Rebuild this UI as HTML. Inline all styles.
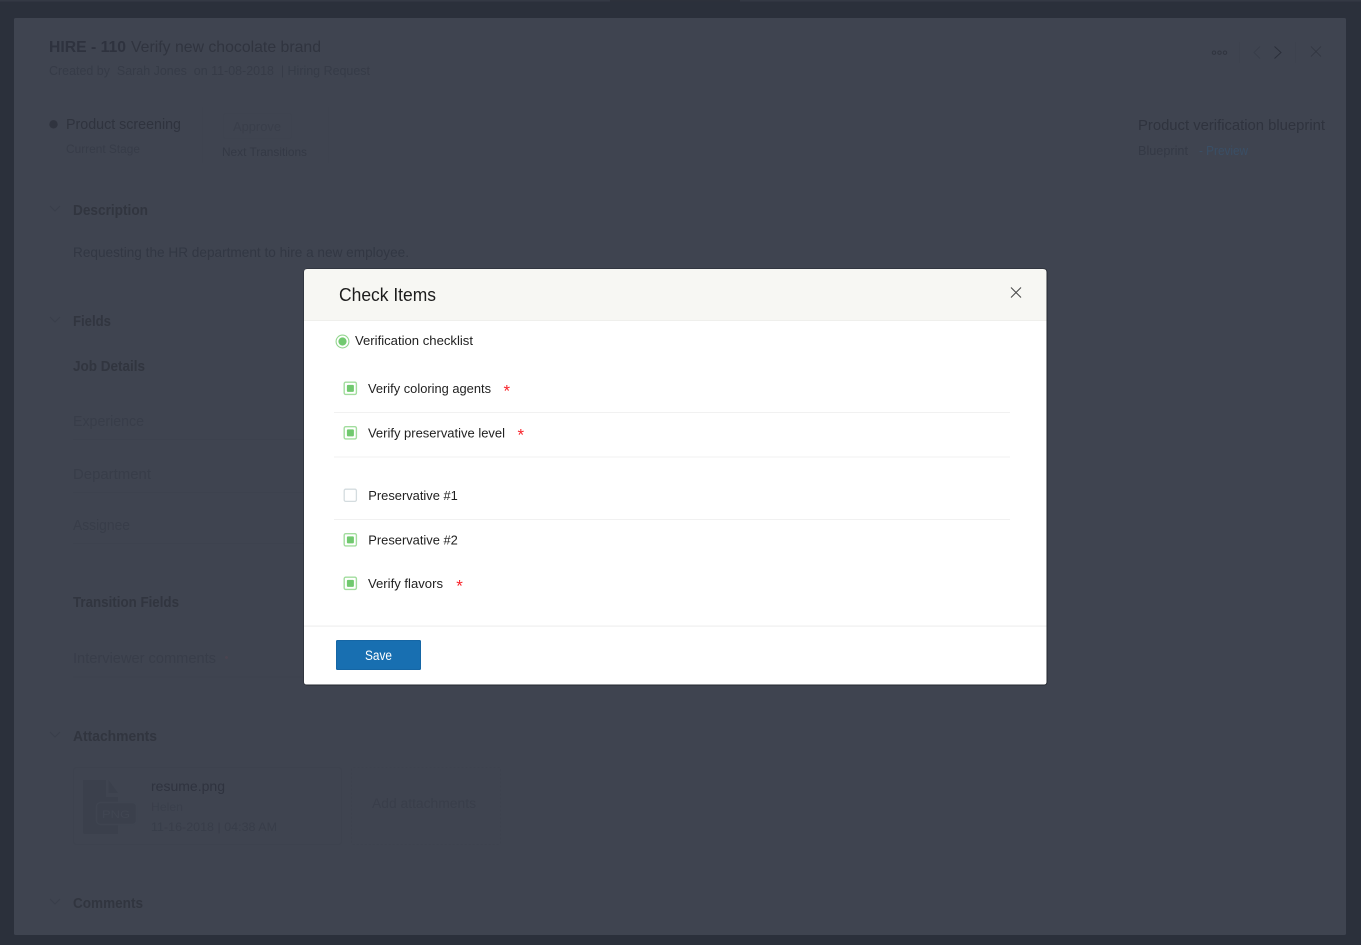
<!DOCTYPE html>
<html lang="en">
<head>
<meta charset="utf-8">
<title>Check Items</title>
<style>
html,body{margin:0;padding:0;width:1361px;height:945px;overflow:hidden;background:#2b303b}
svg{display:block}
text{font-family:"Liberation Sans",Arial,sans-serif;white-space:pre}
.b{font-weight:bold}
.bg{filter:blur(.3px)}
.soft{filter:blur(.15px)}
</style>
</head>
<body>
<svg width="1361" height="945" viewBox="0 0 1361 945" xmlns="http://www.w3.org/2000/svg">
<rect width="1361" height="945" fill="#2b303b"/>
<rect width="1361" height="1.5" fill="#343944"/>
<rect x="610" width="130" height="1.5" fill="#2d313b"/>
<rect x="14" y="18" width="1332" height="917" rx="1.5" fill="#3f4450"/>

<g class="bg">
<!-- Header -->
<text class="b" x="49" y="52" font-size="16" textLength="77" lengthAdjust="spacingAndGlyphs" fill="#2e323e">HIRE - 110</text>
<text x="131" y="52" font-size="16" textLength="190" lengthAdjust="spacingAndGlyphs" fill="#30343f">Verify new chocolate brand</text>
<text x="49" y="75" font-size="13" textLength="321" lengthAdjust="spacingAndGlyphs" fill="#363b47">Created by  Sarah Jones  on 11-08-2018  | Hiring Request</text>
<!-- header icons -->
<g fill="none" stroke="#30343f" stroke-width="1">
<circle cx="1214" cy="52.700" r="1.700"/><circle cx="1219.500" cy="52.700" r="1.700"/><circle cx="1225" cy="52.700" r="1.700"/>
<path d="M1239.500 42V63M1295.500 42V63" stroke="#3d424e"/>
<path d="M1260 46.500L1254 52.500L1260 58.500" stroke="#393e4a"/>
<path d="M1274.500 46.500L1281 52.500L1274.500 58.500" stroke="#2b2f3a"/>
<path d="M1311 46.500L1321 56.500M1321 46.500L1311 56.500" stroke="#30343f" stroke-width=".8"/>
</g>

<!-- Stage row -->
<circle cx="53.500" cy="124.300" r="4.200" fill="#30343f"/>
<text x="66" y="129" font-size="15" textLength="115" lengthAdjust="spacingAndGlyphs" fill="#2f333e">Product screening</text>
<text x="66" y="153" font-size="12" textLength="74" lengthAdjust="spacingAndGlyphs" fill="#373c48">Current Stage</text>
<path d="M202.500 107V163M328.500 107V163" stroke="#3e434f"/>
<rect x="223.500" y="113.500" width="68" height="25" rx="2" fill="none" stroke="#3e434f"/>
<text x="233" y="131" font-size="13" textLength="48" lengthAdjust="spacingAndGlyphs" fill="#393e4a">Approve</text>
<text x="222" y="156" font-size="12" textLength="85" lengthAdjust="spacingAndGlyphs" fill="#343945">Next Transitions</text>
<text x="1138" y="130" font-size="15" textLength="187" lengthAdjust="spacingAndGlyphs" fill="#2f333e">Product verification blueprint</text>
<text x="1138" y="155" font-size="12.500" textLength="50" lengthAdjust="spacingAndGlyphs" fill="#343945">Blueprint</text>
<text x="1199" y="155" font-size="12.500" textLength="49" lengthAdjust="spacingAndGlyphs" fill="#3a4f66">- Preview</text>

<!-- Section chevrons -->
<g fill="none" stroke="#393e4a" stroke-width="1">
<path d="M50 206L55 211L60 206"/>
<path d="M50 317L55 322L60 317"/>
<path d="M50 732L55 737L60 732"/>
<path d="M50 899L55 904L60 899"/>
</g>

<!-- Sections -->
<g fill="#31353f" font-size="14.500">
<text class="b" x="73" y="215" textLength="75" lengthAdjust="spacingAndGlyphs">Description</text>
<text class="b" x="73" y="326" textLength="38" lengthAdjust="spacingAndGlyphs">Fields</text>
<text class="b" x="73" y="371" textLength="72" lengthAdjust="spacingAndGlyphs">Job Details</text>
<text class="b" x="73" y="607" textLength="106" lengthAdjust="spacingAndGlyphs">Transition Fields</text>
<text class="b" x="73" y="741" textLength="84" lengthAdjust="spacingAndGlyphs">Attachments</text>
<text class="b" x="73" y="908" textLength="70" lengthAdjust="spacingAndGlyphs">Comments</text>
</g>
<text x="73" y="257" font-size="14" textLength="336" lengthAdjust="spacingAndGlyphs" fill="#323743">Requesting the HR department to hire a new employee.</text>
<g fill="#383d49" font-size="14.500">
<text x="73" y="426" textLength="71" lengthAdjust="spacingAndGlyphs">Experience</text>
<text x="73" y="479" textLength="78" lengthAdjust="spacingAndGlyphs">Department</text>
<text x="73" y="530" textLength="57" lengthAdjust="spacingAndGlyphs">Assignee</text>
<text x="73" y="663" textLength="143" lengthAdjust="spacingAndGlyphs">Interviewer comments</text>
</g>
<circle cx="226.500" cy="657.500" r="1.500" fill="#4b4450"/>
<path d="M73 439.500H304M73 492.500H304M73 543.500H304M73 677H304" stroke="#3d424e"/>

<!-- Attachments -->
<rect x="73.500" y="767.500" width="268" height="77" rx="3" fill="none" stroke="#3d424e"/>
<rect x="351.500" y="767.500" width="149" height="77" rx="2" fill="none" stroke="#3d424e" stroke-dasharray="2 2"/>
<path d="M83 780H106V797H118V834H85Q83 834 83 832Z" fill="#3b404c"/>
<path d="M108.500 780L118 793H108.500Z" fill="#3b404c"/>
<rect x="96.500" y="802.500" width="40" height="22" rx="4" fill="#3b404c" stroke="#3f4450" stroke-width="1.500"/>
<text x="102" y="818" font-size="11" textLength="28" lengthAdjust="spacingAndGlyphs" fill="#414652">PNG</text>
<text x="151" y="791" font-size="14" textLength="74" lengthAdjust="spacingAndGlyphs" fill="#2f333f">resume.png</text>
<text x="151" y="811" font-size="12" textLength="32" lengthAdjust="spacingAndGlyphs" fill="#3a3f4b">Helen</text>
<text x="151" y="831" font-size="12" textLength="126" lengthAdjust="spacingAndGlyphs" fill="#383d49">11-16-2018 | 04:38 AM</text>
<text x="372" y="808" font-size="13.500" textLength="104" lengthAdjust="spacingAndGlyphs" fill="#393e4a">Add attachments</text>
</g>

<!-- Modal -->
<rect x="303.500" y="268.500" width="744" height="417" rx="3.500" fill="#23272f"/>
<path d="M304 272Q304 269 307 269H1043Q1046.500 269 1046.500 272V320H304Z" fill="#f7f7f3"/>
<path d="M304 320H1046.500V682Q1046.500 684.500 1044 684.500H306.500Q304 684.500 304 682Z" fill="#fff"/>
<rect x="304" y="320" width="742.500" height="1" fill="#efefec"/>

<g class="soft">
<text x="339" y="301" font-size="18" textLength="97" lengthAdjust="spacingAndGlyphs" fill="#1c1c1c">Check Items</text>
<path d="M1011 287.500L1021 297.500M1021 287.500L1011 297.500" stroke="#4a4a4a" stroke-width="1.100" fill="none"/>

<circle cx="342.500" cy="341.500" r="6.400" fill="#fff" stroke="#93d68f" stroke-width="1.100"/>
<circle cx="342.500" cy="341.500" r="4.100" fill="#71c96f"/>
<text x="355" y="345" font-size="13" textLength="118" lengthAdjust="spacingAndGlyphs" fill="#1f1f1f">Verification checklist</text>

<g fill="#fff" stroke="#a2dd9e" stroke-width="1.400">
<rect x="344.200" y="382.200" width="12.200" height="12.200" rx="1.500"/>
<rect x="344.200" y="426.700" width="12.200" height="12.200" rx="1.500"/>
<rect x="344.200" y="533.700" width="12.200" height="12.200" rx="1.500"/>
<rect x="344.200" y="577.200" width="12.200" height="12.200" rx="1.500"/>
</g>
<rect x="344.200" y="489.200" width="12.200" height="12.200" rx="1.500" fill="#fff" stroke="#d4dcdf" stroke-width="1.300"/>
<g fill="#71c96f">
<rect x="346.900" y="384.900" width="7" height="7" rx="1"/>
<rect x="346.900" y="429.400" width="7" height="7" rx="1"/>
<rect x="346.900" y="536.400" width="7" height="7" rx="1"/>
<rect x="346.900" y="579.900" width="7" height="7" rx="1"/>
</g>

<g fill="#1f1f1f" font-size="13">
<text x="368" y="393" textLength="123" lengthAdjust="spacingAndGlyphs">Verify coloring agents</text>
<text x="368" y="437.500" textLength="137" lengthAdjust="spacingAndGlyphs">Verify preservative level</text>
<text x="368.300" y="500" textLength="89.500" lengthAdjust="spacingAndGlyphs">Preservative #1</text>
<text x="368.300" y="544.500" textLength="89.500" lengthAdjust="spacingAndGlyphs">Preservative #2</text>
<text x="368" y="588" textLength="75" lengthAdjust="spacingAndGlyphs">Verify flavors</text>
</g>
<g fill="#f8242b" font-size="17">
<text x="503.500" y="396.500">*</text>
<text x="517.500" y="440.500">*</text>
<text x="456.200" y="591.500">*</text>
</g>
</g>
<path d="M334 412.500H1010M334 457H1010M334 519.500H1010" stroke="#f1f1f1" fill="none"/>
<rect x="304" y="625.500" width="742.500" height="1.200" fill="#efefef"/>

<rect x="336" y="640" width="85" height="30" rx="1.500" fill="#186fb1"/>
<rect x="336.500" y="640.500" width="84" height="29" rx="1.500" fill="none" stroke="#1566a5"/>
<text x="365" y="660" font-size="13.500" textLength="27" lengthAdjust="spacingAndGlyphs" fill="#fff">Save</text>
</svg>
</body>
</html>
